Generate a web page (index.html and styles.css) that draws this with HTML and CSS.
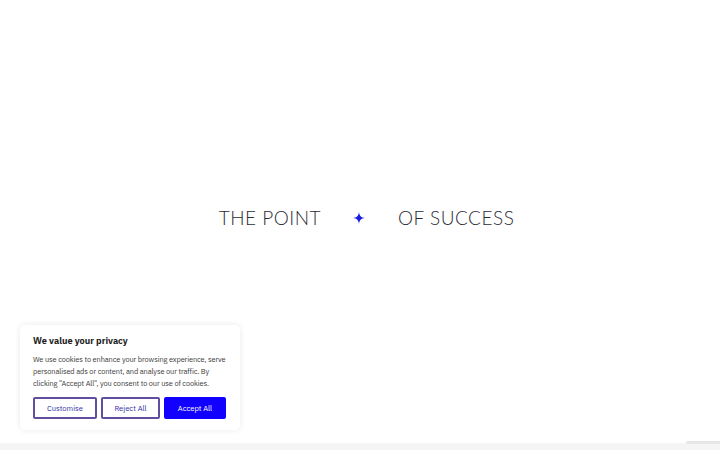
FILE: index.html
```html
<!DOCTYPE html>
<html lang="en">
<head>
<meta charset="utf-8">
<link rel="stylesheet" href="styles.css">
</head>
<body>
<main class="page">
  <section class="hero">
    <h1 class="tagline">
      <span class="word">THE POINT</span>
      <svg class="star" viewBox="0 0 12 12" width="12" height="12"><path d="M6 0 C6.5 4 8 5.5 12 6 C8 6.5 6.5 8 6 12 C5.5 8 4 6.5 0 6 C4 5.5 5.5 4 6 0 Z" fill="#1a1ae0"/></svg>
      <span class="word">OF SUCCESS</span>
    </h1>
  </section>
  <div class="footer-band"></div>
</main>
<div class="badge"></div>
<aside class="cookie">
  <h2 class="cookie-title">We value your privacy</h2>
  <p class="cookie-text">We use cookies to enhance your browsing experience, serve personalised ads or content, and analyse our traffic. By clicking "Accept All", you consent to our use of cookies.</p>
  <div class="cookie-actions">
    <button class="btn btn-outline btn-customise">Customise</button>
    <button class="btn btn-outline btn-reject">Reject All</button>
    <button class="btn btn-solid btn-accept">Accept All</button>
  </div>
</aside>
</body>
</html>
```
FILE: styles.css
```css
html, body {
  margin: 0;
  padding: 0;
  background: #ffffff;
  width: 720px;
  height: 450px;
  overflow: hidden;
}
.page {
  display: flex;
  flex-direction: column;
  height: 450px;
}
.hero {
  height: 443px;
  display: flex;
  justify-content: center;
  align-items: flex-start;
}
.tagline {
  margin: 206px 0 0 0;
  display: flex;
  align-items: center;
  font-family: Lato, "Open Sans", sans-serif;
  font-weight: 300;
  font-size: 19px;
  letter-spacing: 0.5px;
  color: #2b2b33;
  line-height: 24px;
  padding-left: 13px;
}
.star {
  margin: 0 33px 0 32px;
}
.footer-band {
  height: 7px;
  background: #f5f5f5;
}
.badge {
  position: absolute;
  right: 0;
  top: 441px;
  width: 34px;
  height: 3px;
  background: #e6e6e6;
  border-radius: 2px 0 0 2px;
}
.cookie {
  position: absolute;
  left: 20px;
  top: 325px;
  width: 220px;
  box-sizing: border-box;
  padding: 10px 13px 11px 13px;
  background: #ffffff;
  border-radius: 5px;
  box-shadow: 0 0 6px rgba(0,0,0,0.09);
  font-family: "IBM Plex Sans", "Noto Sans", Inter, sans-serif;
}
.cookie-title {
  margin: 0 0 5px 0;
  font-size: 9.2px;
  font-weight: 700;
  color: #212121;
  line-height: 13px;
}
.cookie-text {
  margin: 0 0 8px 0;
  font-size: 7.4px;
  line-height: 12px;
  color: #3a3a3a;
  letter-spacing: -0.1px;
}
.cookie-actions {
  display: flex;
  gap: 4px;
}
.btn {
  height: 22px;
  box-sizing: border-box;
  font-family: inherit;
  font-size: 7.6px;
  font-weight: 400;
  border-radius: 2px;
  padding: 0;
  cursor: pointer;
}
.btn-outline {
  background: #ffffff;
  border: 2px solid #5f4f9e;
  color: #2f2fa8;
}
.btn-customise { width: 64px; }
.btn-reject { width: 59px; }
.btn-accept { width: 62px; }
.btn-solid {
  background: #1100ff;
  border: 2px solid #1100ff;
  color: #ffffff;
}
```
